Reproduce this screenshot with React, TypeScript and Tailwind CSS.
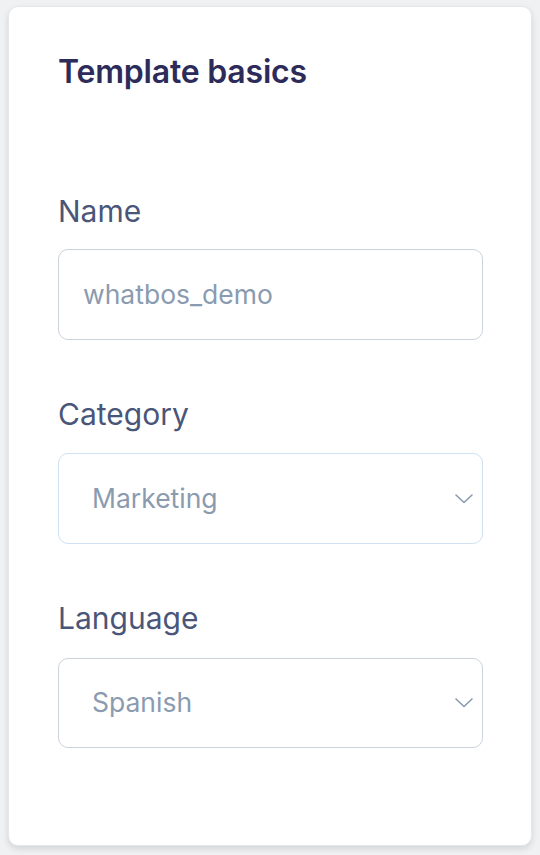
import React from "react";

function Chevron() {
  return (
    <svg width="18" height="10" viewBox="0 0 18 10" fill="none" className="shrink-0">
      <path d="M1 1l8 7.5L17 1" stroke="#8a9bb0" strokeWidth="1.6" strokeLinecap="round" strokeLinejoin="round" />
    </svg>
  );
}

function Label({ children }: { children: React.ReactNode }) {
  return <div className="text-[30px] leading-[36px] text-[#4a5679]">{children}</div>;
}

export default function App() {
  return (
    <div className="min-h-[855px] bg-[#f0f1f3] px-[8px] pt-[6px] pb-[9px]" style={{ fontFamily: "Inter, 'Noto Sans', sans-serif" }}>
      <div className="h-[840px] rounded-[10px] border border-[#e6e7ea] bg-white pl-[49px] pr-[48px] pt-[46px] shadow-[0_3px_6px_rgba(0,0,0,0.12)]">
        <h2 className="text-[32px] leading-[38px] font-semibold text-[#2d2b5a] tracking-[-0.2px]">Template basics</h2>

        <div className="mt-[102px]">
          <Label>Name</Label>
          <div className="mt-[20px] flex h-[91px] items-center rounded-[10px] border-[1.5px] border-[#cbd2da] pl-[24px] text-[26.5px] text-[#8a9bb0]">
            whatbos_demo
          </div>
        </div>

        <div className="mt-[56px]">
          <Label>Category</Label>
          <div className="mt-[21px] flex h-[91px] items-center justify-between rounded-[10px] border-[1.5px] border-[#cfe1f2] pl-[33px] pr-[9px] text-[26.5px] text-[#8a9bb0]">
            <span>Marketing</span>
            <Chevron />
          </div>
        </div>

        <div className="mt-[56px]">
          <Label>Language</Label>
          <div className="mt-[22px] flex h-[90px] items-center justify-between rounded-[10px] border-[1.5px] border-[#cbd2da] pl-[33px] pr-[9px] text-[26.5px] text-[#8a9bb0]">
            <span>Spanish</span>
            <Chevron />
          </div>
        </div>
      </div>
    </div>
  );
}
